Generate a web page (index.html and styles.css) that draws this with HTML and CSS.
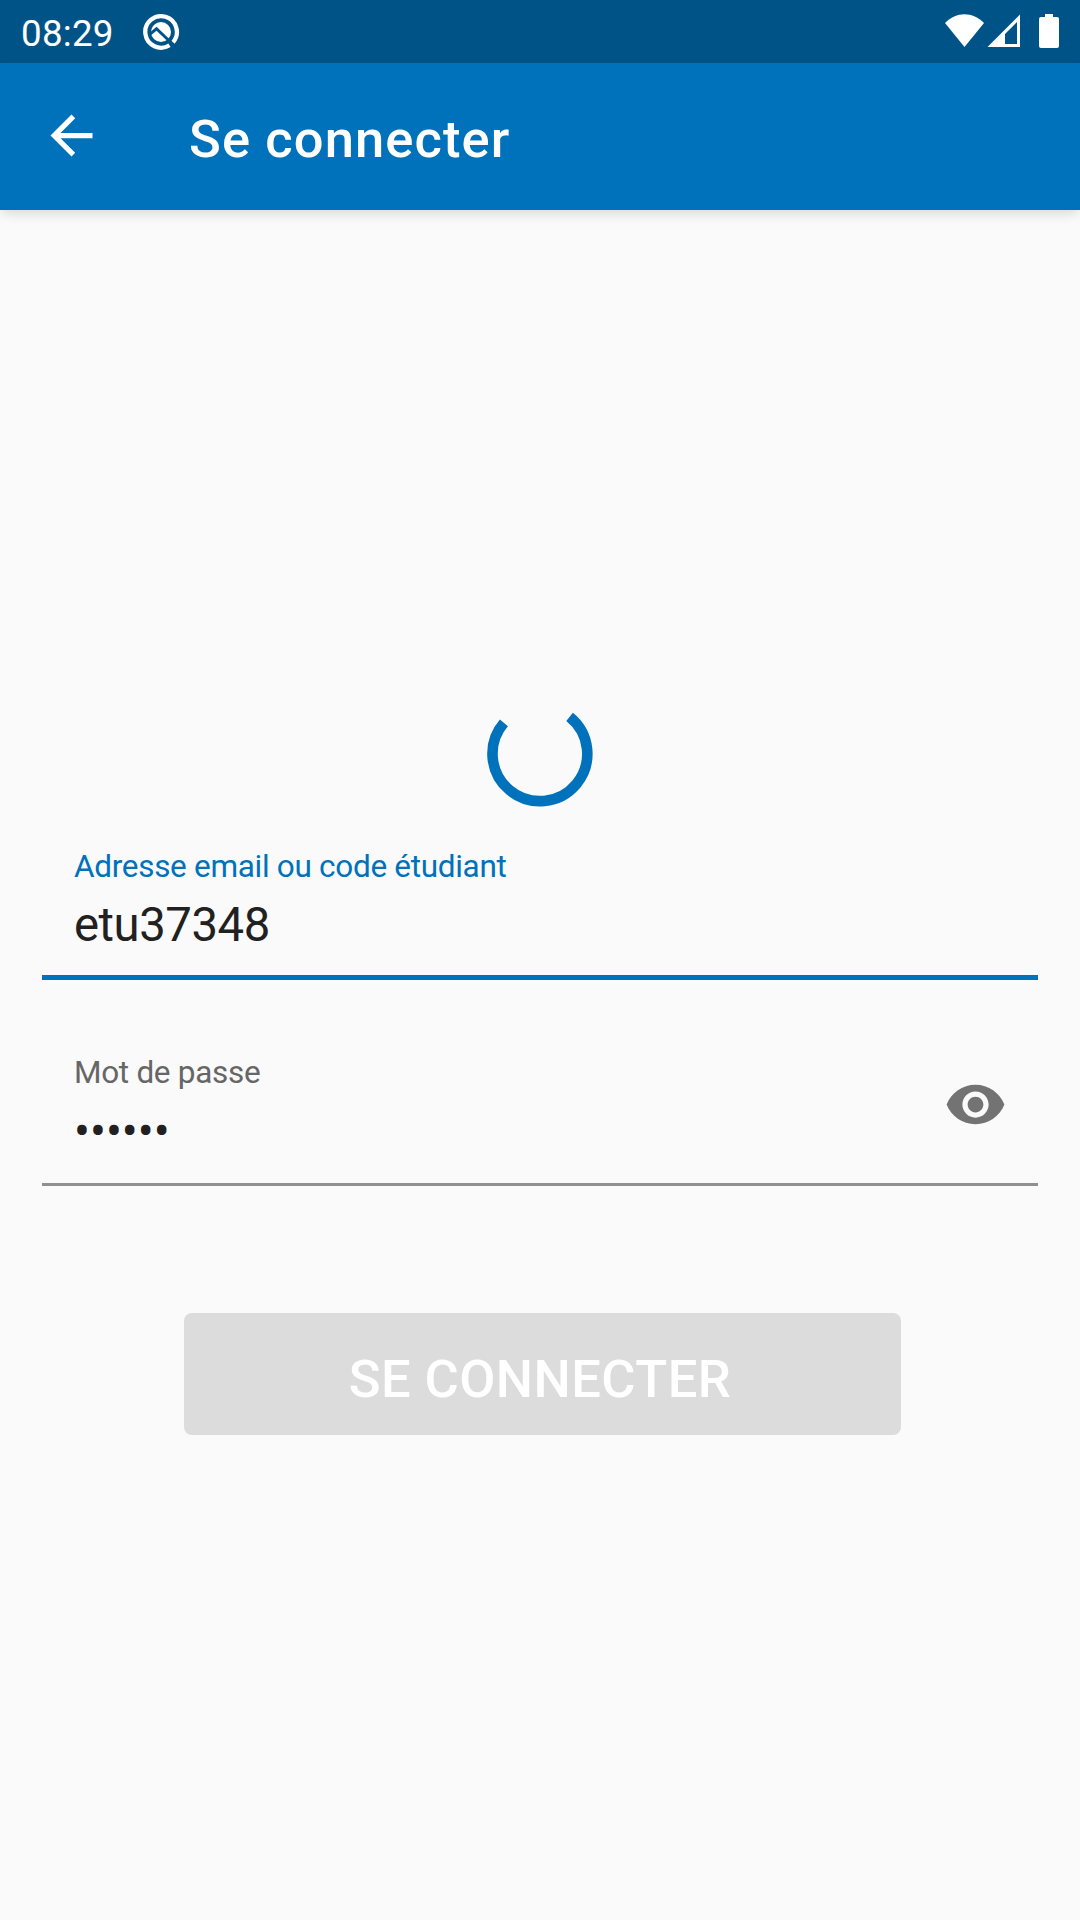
FILE: index.html
```html
<!DOCTYPE html>
<html lang="fr">
<head>
<meta charset="utf-8">
<title>Se connecter</title>
<link rel="stylesheet" href="styles.css">
</head>
<body>
<div class="status-bar">
  <span class="time">08:29</span>
  <svg class="notification" viewBox="0 0 38 38" width="38" height="38">
    <path d="M31 29.300A15.800 15.800 0 1 0 27.500 32.300" fill="none" stroke="#fff" stroke-width="4.300"/>
    <circle cx="19" cy="19" r="10" fill="#fff"/>
    <path d="M7 22L14.500 15.800L31 31.500" fill="none" stroke="#005387" stroke-width="2.900"/>
  </svg>
  <svg class="system" viewBox="0 0 116 36" width="116" height="36">
    <path d="M20.500 33L1 9C12-2.800 29-2.800 40 9Z" fill="#fff"/>
    <path fill-rule="evenodd" d="M43.500 33L76 0.500V33ZM61 20V30H73V8Z" fill="#fff"/>
    <path d="M101 0h8v3h4a2 2 0 0 1 2 2v27a2 2 0 0 1-2 2H97a2 2 0 0 1-2-2V5a2 2 0 0 1 2-2h4Z" fill="#fff"/>
  </svg>
</div>
<header class="app-bar">
  <svg class="back" viewBox="0 0 24 24" width="63" height="63"><path fill="#fff" d="M20 11H7.830l5.590-5.590L12 4l-8 8 8 8 1.410-1.410L7.830 13H20v-2z"/></svg>
  <h1 class="title">Se connecter</h1>
</header>
<main class="content">
  <svg class="spinner" viewBox="0 0 106 106" width="106" height="106"><path d="M16.900 21.900A47.400 47.400 0 1 0 82.600 15.800" fill="none" stroke="#0071bb" stroke-width="10.600"/></svg>
  <div class="field focused">
    <div class="texts">
      <span class="label">Adresse email ou code étudiant</span>
      <span class="value">etu37348</span>
    </div>
  </div>
  <div class="field">
    <div class="texts">
      <span class="label">Mot de passe</span>
      <span class="value masked">••••••</span>
    </div>
    <svg class="eye" viewBox="0 0 24 24" width="63" height="63"><path fill="#737373" d="M12 4.500C7 4.500 2.730 7.610 1 12c1.730 4.390 6 7.500 11 7.500s9.270-3.110 11-7.500c-1.730-4.390-6-7.500-11-7.500zM12 17c-2.760 0-5-2.240-5-5s2.240-5 5-5 5 2.240 5 5-2.240 5-5 5zm0-8c-1.660 0-3 1.340-3 3s1.340 3 3 3 3-1.340 3-3-1.340-3-3-3z"/></svg>
  </div>
  <button class="submit" disabled>SE CONNECTER</button>
</main>
</body>
</html>
```
FILE: styles.css
```css
* { box-sizing: border-box; }
body {
  margin: 0;
  width: 1080px;
  height: 1920px;
  display: flex;
  flex-direction: column;
  background: #fafafa;
  font-family: Roboto, sans-serif;
  overflow: hidden;
}
svg { display: block; flex: none; }
.status-bar {
  height: 63px;
  padding: 0 20px 0 21px;
  display: flex;
  align-items: center;
  background: #005387;
  color: #fff;
}
.time { font-size: 36.75px; line-height: 44px; padding-top: 4px; letter-spacing: .25px; }
.notification { margin-left: 28px; }
.system { margin: 1px 0 0 auto; }
.app-bar {
  height: 147px;
  padding: 0 0 0 40px;
  display: flex;
  align-items: center;
  gap: 86px;
  background: #0071bb;
  box-shadow: 0 5px 12px -2px rgba(0, 0, 0, .14);
}
.back { margin-bottom: 2px; }
.title {
  margin: 0;
  padding-top: 5px;
  color: #fff;
  font-size: 52.5px;
  font-weight: 500;
  line-height: 62px;
  letter-spacing: 1.1px;
}
.content {
  padding: 491px 42px 0;
  display: flex;
  flex-direction: column;
}
.spinner { align-self: center; }
.field {
  margin-top: 74px;
  height: 132px;
  padding: 1px 31px 0 32px;
  display: flex;
  justify-content: space-between;
  border-bottom: 3px solid #909090;
}
.field.focused { margin-top: 41px; border-bottom: 5px solid #0071bb; }
.texts { display: flex; flex-direction: column; gap: 13px; }
.focused .texts { gap: 12px; }
.label { color: #666; font-size: 31.5px; line-height: 36px; letter-spacing: -.3px; }
.focused .label { color: #0071bb; }
.value { color: #212121; font-size: 47.25px; line-height: 56px; letter-spacing: -.45px; }
.value.masked { letter-spacing: 0; }
.eye { margin-top: 18px; }
.submit {
  margin: 127px 137px 0 142px;
  height: 122px;
  padding: 10px 5px 0 0;
  border: 0;
  border-radius: 8px;
  background: #dcdcdc;
  color: #fff;
  font: 500 52.5px/62px Roboto, sans-serif;
  letter-spacing: .42px;
}
```
